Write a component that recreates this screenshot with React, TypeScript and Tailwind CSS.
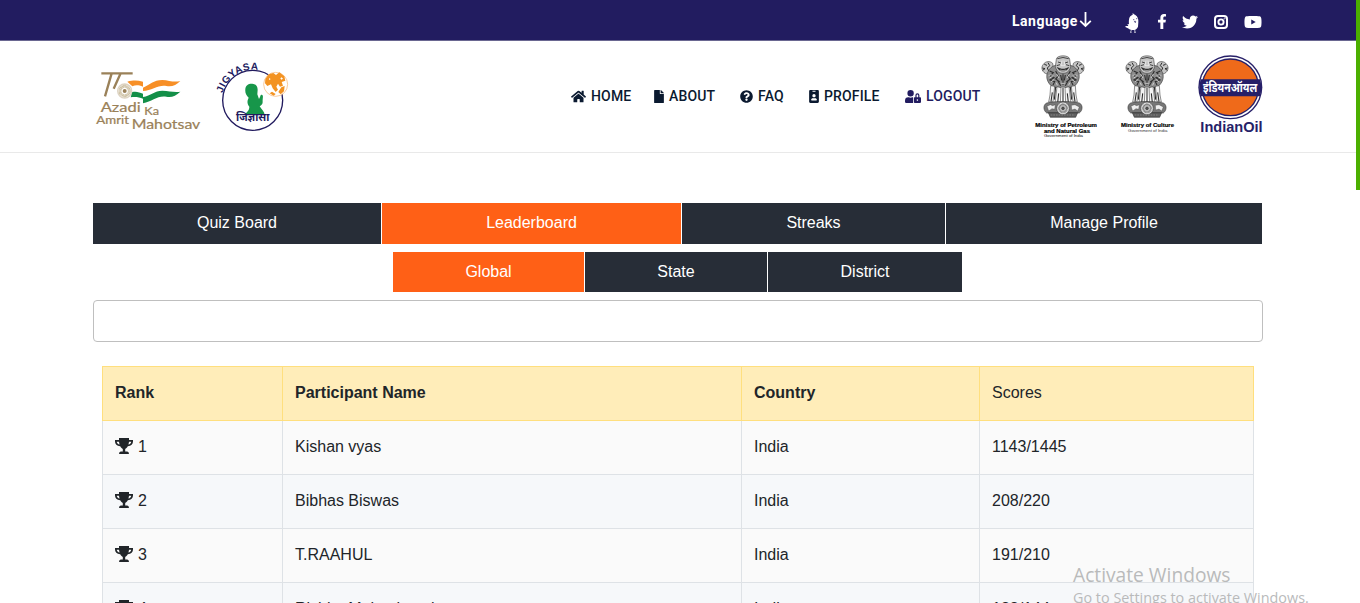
import type { ReactNode } from 'react';
import { FaHome, FaFile, FaQuestionCircle, FaIdBadge, FaUserLock, FaFacebookF, FaTwitter, FaYoutube } from 'react-icons/fa';

function AzadiLogo() {
  return (
    <svg width="120" height="95" viewBox="0 0 360 285" fontFamily="Lato, sans-serif" fill="#9a8159">
      <path d="M49 70H143M80 70L60 139M107 70L86 116" fill="none" stroke="#9a8159" strokeWidth="7" />
      <circle cx="119" cy="123" r="21" fill="#fff" stroke="#ddd3c2" strokeWidth="4" />
      <circle cx="119" cy="123" r="14" fill="none" stroke="#c3b491" strokeWidth="9" strokeDasharray="2 1" />
      <circle cx="119" cy="123" r="6" />
      <path d="M127 95C146 90 158 91 174 95V110C160 105 152 105 142 109Z" fill="#f78f26" />
      <path d="M142 126C155 123 163 127 174 131V146C162 141 150 140 137 142Z" fill="#138f48" />
      <path d="M174 113C195 105 205 90 232 90C252 91 267 98 286 93C273 106 261 111 244 108C221 103 201 122 174 123Z" fill="#f78f26" />
      <path d="M174 141C198 137 208 122 232 122C253 122 265 128 286 125C272 138 260 143 244 140C217 136 202 154 174 160Z" fill="#138f48" />
      <g stroke="#9a8159" strokeWidth=".7">
        <text x="47" y="186" fontSize="42" textLength="120" lengthAdjust="spacingAndGlyphs">Azadi</text>
        <text x="178" y="196" fontSize="33" textLength="44" lengthAdjust="spacingAndGlyphs">Ka</text>
        <text x="34" y="221" fontSize="34" textLength="98" lengthAdjust="spacingAndGlyphs">Amrit</text>
        <text x="140" y="236" fontSize="42" textLength="206" lengthAdjust="spacingAndGlyphs">Mahotsav</text>
      </g>
    </svg>
  );
}

function JigyasaLogo() {
  return (
    <svg width="100" height="95" viewBox="360 0 300 285" fill="#211a5e">
      <defs>
        <path id="jigyasa-arc" d="M413 130A95 95 0 0 1 521 60" />
      </defs>
      <circle cx="503" cy="151" r="90" fill="none" stroke="#211a5e" strokeWidth="4" />
      <text fontFamily="Liberation Sans, sans-serif" fontWeight="bold" fontSize="30">
        <textPath href="#jigyasa-arc" textLength="139">JIGYASA</textPath>
      </text>
      <path d="M481 118C481 106 491 100 502 101C512 102 518 109 518 119L517 133L522 147C528 138 525 132 532 135C536 139 532 145 533 156C533 163 529 165 524 169C530 179 538 185 539 195H479C486 184 493 182 493 170C484 159 488 149 491 143C483 136 480 128 481 118Z" fill="#17964a" />
      <circle cx="572" cy="103" r="36" fill="#fff" stroke="#f6b16b" strokeWidth="2" />
      <path d="M541 87L551 73L565 69L573 75L583 67L598 79L601 92L590 96L594 107L585 110L579 101L574 110L579 119L572 126L563 115L558 103L547 108L540 100ZM589 112L599 108L597 124L587 133L580 126ZM561 125L572 132L566 137L554 130Z" fill="#f39322" />
      <path d="M590 82L594 86L589 89L586 85ZM552 84L557 87L553 91Z" fill="#fff" />
      <text x="453" y="213" fontFamily="Noto Sans Devanagari, Noto Sans, sans-serif" fontWeight="bold" fontSize="34" textLength="100" lengthAdjust="spacingAndGlyphs">जिज्ञासा</text>
    </svg>
  );
}

/* State emblem, centred on x = 0. */
function Lions() {
  return (
    <g stroke="#2e2e2e" strokeWidth="1.6" fill="#8c8c8c">
      <path d="M-48 87C-62 84 -68 67 -59 58C-52 48 -39 47 -31 55L-27 79L-39 87ZM48 87C62 84 68 67 59 58C52 48 39 47 31 55L27 79L39 87Z" fill="#c4c4c4" />
      <path d="M-62 69L-54 71L-61 76M-56 58L-48 61M-45 53L-40 62L-47 69L-43 78M62 69L54 71L61 76M56 58L48 61M45 53L40 62L47 69L43 78" fill="none" strokeWidth="3" />
      <path d="M-45 80C-39 67 -27 60 -18 61H18C31 61 40 69 45 80C52 92 49 108 38 120C29 129 17 125 10 130L0 124L-10 130C-17 125 -29 129 -38 120C-49 108 -52 92 -45 80Z" />
      <path d="M-40 78L-29 83L-39 92L-27 98L-39 105L-25 110L-30 120M40 78L29 83L39 92L27 98L39 105L25 110L30 120M-22 78L-14 93L-22 102L-10 111M22 78L14 93L22 102L10 111M0 88V119M-7 90L-4 106M7 90L4 106M-15 108L-7 122M15 108L7 122" fill="none" strokeWidth="3.4" />
      <path d="M-43 92L-34 88M-40 99L-29 92M-36 110L-27 104M43 92L34 88M40 99L29 92M36 110L27 104M-19 87L-12 99M19 87L12 99M-5 115L5 115M-20 113L-17 121M20 113L17 121" fill="none" stroke="#e4e4e4" strokeWidth="2.4" />
      <path d="M-20 43C-20 29 20 29 20 43L23 65C18 82 9 85 0 85C-9 85 -18 82 -23 65Z" fill="#c6c6c6" />
      <path d="M-17 41Q0 34 17 41M-15 51L-6 54M15 51L6 54M-19 62L-9 59M19 62L9 59" fill="none" strokeWidth="2.6" />
      <path d="M-17 67C-6 74 6 74 17 67C12 82 -12 82 -17 67Z" fill="#222" />
      <path d="M-9 75Q0 78 9 75M-3 47L-6 62H6L3 47" fill="none" stroke="#fff" />
      <path d="M-37 122L-39 150L-43 171H-30L-25 124ZM-18 125L-21 150L-24 174H-8L-6 128ZM18 125L21 150L24 174H8L6 128ZM37 122L39 150L43 171H30L25 124Z" fill="#f3f3f3" />
      <path d="M-32 142L-36 170M-13 145L-16 173M13 145L16 173M32 142L36 170M-22 126L-26 164M22 126L26 164M0 127V172" fill="none" strokeWidth="3.2" />
      <path d="M-49 174C-28 168 28 168 49 174C60 179 60 196 49 204H-49C-60 196 -60 179 -49 174Z" fill="#777" />
      <path d="M-44 203H44L38 217H-38Z" fill="#5b5b5b" />
      <path d="M-48 184L-38 179L-31 182L-23 179L-25 193L-33 191L-43 198ZM25 181L36 179L49 186L44 198L36 192L26 195Z" fill="#eee" strokeWidth="1" />
      <circle cx="0" cy="190" r="19" fill="#ddd" />
      <circle cx="0" cy="190" r="12" fill="#bbb" stroke="#666" strokeWidth="5" strokeDasharray="2 1.5" />
      <circle cx="0" cy="190" r="4" fill="#555" />
      <path d="M-37 210H37" stroke="#aaa" strokeDasharray="5 3" />
    </g>
  );
}

function PetroleumEmblem() {
  return (
    <svg width="70" height="100" viewBox="30 0 210 300" fontFamily="Liberation Sans, sans-serif">
      <g transform="translate(129 0)"><Lions /></g>
      <g fontWeight="bold" fontSize="15" fill="#000" stroke="#000" strokeWidth=".5">
        <text x="46" y="245" textLength="185" lengthAdjust="spacingAndGlyphs">Ministry of Petroleum</text>
        <text x="72" y="263" textLength="138" lengthAdjust="spacingAndGlyphs">and Natural Gas</text>
      </g>
      <text x="72" y="275" fontSize="12" textLength="117" lengthAdjust="spacingAndGlyphs">Government of India</text>
    </svg>
  );
}

function CultureEmblem() {
  return (
    <svg width="70" height="100" viewBox="282 0 210 300" fontFamily="Liberation Sans, sans-serif">
      <g transform="translate(381 0)"><Lions /></g>
      <text x="303" y="245" fontWeight="bold" fontSize="15" stroke="#000" strokeWidth=".5" textLength="159" lengthAdjust="spacingAndGlyphs">Ministry of Culture</text>
      <text x="324" y="262" fontSize="12" fill="#333" textLength="118" lengthAdjust="spacingAndGlyphs">Government of India</text>
    </svg>
  );
}

function IndianOilLogo() {
  return (
    <svg width="70" height="100" viewBox="528 0 210 300" fill="#261f68">
      <circle cx="631" cy="127" r="96" />
      <circle cx="631" cy="127" r="92" fill="#fff" />
      <circle cx="631" cy="127" r="87" />
      <circle cx="631" cy="127" r="83" fill="#ef6a1a" />
      <path d="M542 103H720Q728 127 720 154H542Q534 127 542 103Z" />
      <text x="549" y="141" fill="#fff" fontFamily="Noto Sans Devanagari, Noto Sans, sans-serif" fontWeight="bold" fontSize="37" textLength="163" lengthAdjust="spacingAndGlyphs">इंडियनऑयल</text>
      <text x="541" y="261" fontFamily="Liberation Sans, sans-serif" fontWeight="bold" fontSize="43" textLength="187" lengthAdjust="spacingAndGlyphs">IndianOil</text>
    </svg>
  );
}

function KooIcon() {
  return (
    <svg width="14" height="20" viewBox="0 0 42 60" fill="#fff">
      <path d="M23 0L27 4L31 6C38 10 41 19 40 28L39 41C36 50 27 52 20 51C12 50 8 44 1 42L2 39L10 39L7 33L12 34C11 22 11 9 23 5Z" />
      <path d="M19 51L17 57M29 50L30 57M15 58H20M27 58H33" stroke="#fff" strokeWidth="2" />
      <path d="M24 20H28M33 17H37M28 25H32L31 29Z" stroke="#221c60" strokeWidth="2" fill="none" />
    </svg>
  );
}

function InstagramIcon() {
  return (
    <svg width="14" height="14" viewBox="0 0 14 14" fill="none" stroke="#fff">
      <rect x="1" y="1" width="12" height="12" rx="3" strokeWidth="2" />
      <circle cx="7" cy="7" r="2.6" strokeWidth="1.9" />
      <circle cx="10.6" cy="3.5" r=".6" strokeWidth=".6" />
    </svg>
  );
}

function TrophyIcon() {
  return (
    <svg className="shrink-0" width="18" height="16" viewBox="0 0 18 16" fill="#212529">
      <path d="M4 0H14V2H18V3.6C18 6 16.2 8 12.8 8.3C12 9.8 11 10.6 10.2 11V13.6H12.2Q14 13.8 14 16H4Q4 13.8 5.8 13.6H7.8V11C7 10.6 6 9.8 5.2 8.3C1.8 8 0 6 0 3.6V2H4ZM1.8 3.7C1.8 5.2 3 6.2 4.6 6.5C4.2 5.5 4.1 4.6 4 3.7ZM14 3.7C13.9 4.6 13.8 5.5 13.4 6.5C15 6.2 16.2 5.2 16.2 3.7Z" fillRule="evenodd" />
    </svg>
  );
}

function NavItem({ icon, label, width, iconWidth, accent }: { icon: ReactNode; label: string; width: string; iconWidth: string; accent?: boolean }) {
  return (
    <a className={`flex items-center whitespace-nowrap ${width} ${accent ? 'text-[#221c60]' : 'text-[#0b1a30]'}`}>
      <span className={`shrink-0 ${iconWidth}`}>{icon}</span>
      <span>{label}</span>
    </a>
  );
}

function Tab({ label, width, active }: { label: string; width: string; active?: boolean }) {
  return (
    <button className={`pb-px text-center text-white ${width} ${active ? 'bg-[#ff6016]' : 'bg-[#272d37]'}`}>{label}</button>
  );
}

const rows = [
  { rank: 1, name: 'Kishan vyas', score: '1143/1445' },
  { rank: 2, name: 'Bibhas Biswas', score: '208/220' },
  { rank: 3, name: 'T.RAAHUL', score: '191/210' },
  { rank: 4, name: 'Rishita Maheshwari', score: '188/144' },
];

export default function App() {
  return (
    <div className="relative h-[603px] w-[1360px] overflow-hidden bg-white font-['Liberation_Sans',sans-serif] text-base text-[#212529]">
      <div className="flex h-[41px] items-center border-b border-[#6a6791] bg-[#221c60] pl-[1012px] text-white">
        <span className="w-[67px] pt-[3px] font-[Roboto,sans-serif] text-[14px] font-bold tracking-[0.5px]">Language</span>
        <svg className="mr-[33px]" width="13" height="16" viewBox="0 0 13 16" fill="none" stroke="#fff" strokeWidth="1.8">
          <path d="M6.5 0V14M1.2 8.8L6.5 14L11.8 8.8" />
        </svg>
        <span className="mt-[6px] w-8"><KooIcon /></span>
        <span className="mt-[3px] w-[25px]"><FaFacebookF className="h-[15px] w-[10px]" /></span>
        <span className="mt-[3px] w-8"><FaTwitter className="h-4 w-4" /></span>
        <span className="mt-[3px] w-[30px]"><InstagramIcon /></span>
        <span className="mt-[3px]"><FaYoutube className="h-[18px] w-[18px]" /></span>
      </div>

      <header className="flex h-[112px] items-start border-b border-[#e9e9e9] pl-[85px] pt-[9px]">
        <AzadiLogo />
        <JigyasaLogo />
        <nav className="ml-[266px] mt-[36px] flex h-5 gap-6 font-[Roboto,sans-serif] text-[14px] font-medium tracking-[0.15px]">
          <NavItem icon={<FaHome className="h-[15px] w-[15px]" />} label="HOME" width="w-[59px]" iconWidth="w-5" />
          <NavItem icon={<FaFile className="h-[13px] w-[10px]" />} label="ABOUT" width="w-[62px]" iconWidth="w-[15px]" />
          <NavItem icon={<FaQuestionCircle className="h-[13px] w-[13px]" />} label="FAQ" width="w-[45px]" iconWidth="w-[18px]" />
          <NavItem icon={<FaIdBadge className="h-[13px] w-[10px]" />} label="PROFILE" width="w-[72px]" iconWidth="w-[15px]" />
          <NavItem icon={<FaUserLock className="h-[13px] w-4" />} label="LOGOUT" width="w-[78px]" iconWidth="w-[21px]" accent />
        </nav>
        <div className="-mt-[5px] ml-[47px] flex gap-[14px]">
          <PetroleumEmblem />
          <CultureEmblem />
          <span className="-ml-[2px]"><IndianOilLogo /></span>
        </div>
      </header>

      <main className="px-[93px] pt-[50px]">
        <div className="flex h-[41px] w-[1169px] gap-px">
          <Tab label="Quiz Board" width="w-[288px]" />
          <Tab label="Leaderboard" width="w-[299px]" active />
          <Tab label="Streaks" width="w-[263px]" />
          <Tab label="Manage Profile" width="w-[316px]" />
        </div>
        <div className="ml-[300px] mt-2 flex h-10 gap-px">
          <Tab label="Global" width="w-[191px]" active />
          <Tab label="State" width="w-[182px]" />
          <Tab label="District" width="w-[194px]" />
        </div>
        <input className="mt-2 block h-[42px] w-[1170px] rounded-[4px] border border-[#bfbfbf] bg-white px-3" />

        <table className="ml-[9px] mt-6 w-[1152px] table-fixed border-collapse">
          <colgroup>
            <col className="w-[180px]" />
            <col className="w-[459px]" />
            <col className="w-[238px]" />
            <col className="w-[274px]" />
          </colgroup>
          <thead>
            <tr className="h-[54px] bg-[#ffedb9] text-left">
              <th className="border border-[#ffdf7e] px-3 pb-px">Rank</th>
              <th className="border border-[#ffdf7e] px-3 pb-px">Participant Name</th>
              <th className="border border-[#ffdf7e] px-3 pb-px">Country</th>
              <td className="border border-[#ffdf7e] px-3 pb-px">Scores</td>
            </tr>
          </thead>
          <tbody>
            {rows.map((r) => (
              <tr key={r.rank} className="h-[54px] odd:bg-[#fafafa] even:bg-[#f6f8fa]">
                <td className="border border-[#dee2e6] px-3 pb-px">
                  <span className="flex items-start gap-[5px]">
                    <span className="pt-[3px]"><TrophyIcon /></span>
                    {r.rank}
                  </span>
                </td>
                <td className="border border-[#dee2e6] px-3 pb-px">{r.name}</td>
                <td className="border border-[#dee2e6] px-3 pb-px">India</td>
                <td className="border border-[#dee2e6] px-3 pb-px">{r.score}</td>
              </tr>
            ))}
          </tbody>
        </table>
      </main>

      <div className="absolute right-0 top-0 h-[190px] w-1 bg-[#4caf00]" />
      <div className="absolute left-[1073px] top-[562px] whitespace-nowrap font-['Open_Sans',sans-serif] text-[#b9babb]">
        <div className="text-[19.2px] leading-[26px]">Activate Windows</div>
        <div className="text-[14.4px] leading-[20px]">Go to Settings to activate Windows.</div>
      </div>
    </div>
  );
}
